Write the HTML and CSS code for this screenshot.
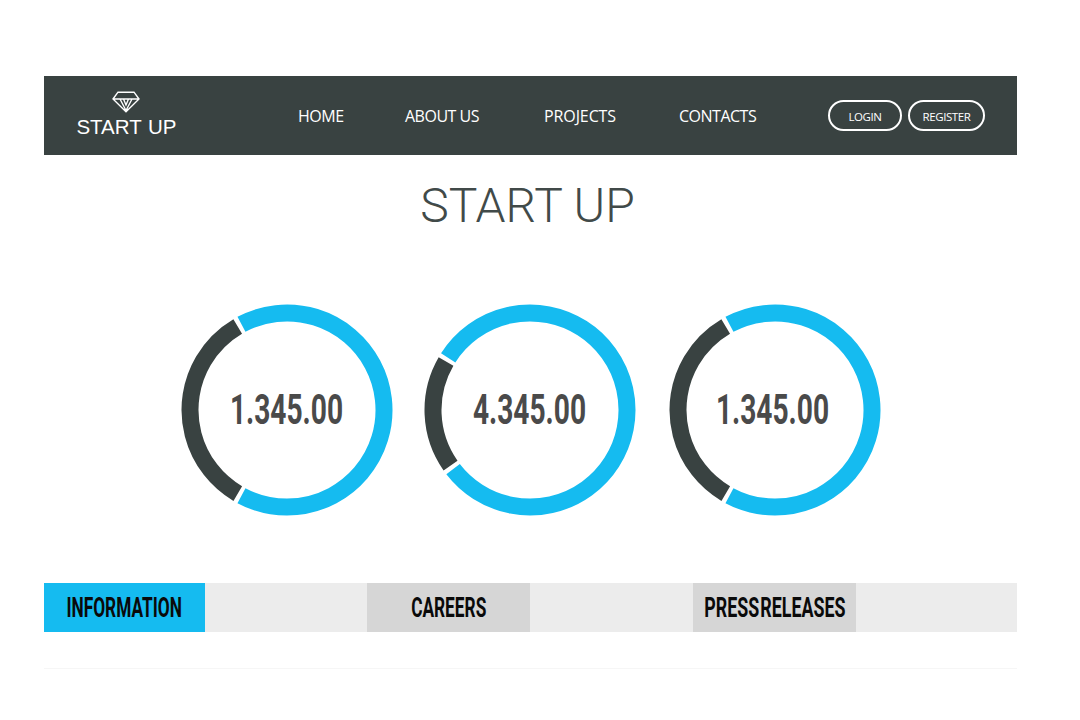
FILE: index.html
```html
<!DOCTYPE html>
<html>
  <head>
    <meta charset="UTF-8" />
    <title>Start Up</title>
    <link rel="stylesheet" href="styles.css">
  </head>
  <body>
    <div class="page">
      <div class="navbar">
        <div class="logo">
          <svg class="logo-icon" width="28" height="22" viewBox="0 0 28 22">
            <path d="M6 1.2H22L27 8L14 20.8L1 8Z M1 8H27 M8 8L14 19.5L20 8 M11.5 8L14 14L16.5 8" fill="none" stroke="#fff" stroke-width="1.4" />
          </svg>
          <div class="logo-text">START UP</div>
        </div>
        <div class="menu">
          <a href="#">HOME</a>
          <a href="#">ABOUT US</a>
          <a class="projects" href="#">PROJECTS</a>
          <a href="#">CONTACTS</a>
        </div>
        <div class="auth">
          <a class="pill login" href="#">LOGIN</a>
          <a class="pill register" href="#">REGISTER</a>
        </div>
      </div>

      <h1 class="title">START UP</h1>

      <div class="rings">
        <div class="ring">
          <svg width="212" height="212" viewBox="0 0 212 212">
            <circle class="arc blue" cx="106" cy="106" r="97" pathLength="360" stroke-dasharray="236 124" transform="rotate(-118 106 106)" />
            <circle class="arc dark" cx="106" cy="106" r="97" pathLength="360" stroke-dasharray="119 241" transform="rotate(120.5 106 106)" />
          </svg>
          <div class="amount"><span>1.345.00</span></div>
        </div>
        <div class="ring">
          <svg width="212" height="212" viewBox="0 0 212 212">
            <circle class="arc blue" cx="106" cy="106" r="97" pathLength="360" stroke-dasharray="290 70" transform="rotate(-147.5 106 106)" />
            <circle class="arc dark" cx="106" cy="106" r="97" pathLength="360" stroke-dasharray="65 295" transform="rotate(145 106 106)" />
          </svg>
          <div class="amount"><span>4.345.00</span></div>
        </div>
        <div class="ring last">
          <svg width="212" height="212" viewBox="0 0 212 212">
            <circle class="arc blue" cx="106" cy="106" r="97" pathLength="360" stroke-dasharray="236 124" transform="rotate(-118 106 106)" />
            <circle class="arc dark" cx="106" cy="106" r="97" pathLength="360" stroke-dasharray="119 241" transform="rotate(120.5 106 106)" />
          </svg>
          <div class="amount"><span>1.345.00</span></div>
        </div>
      </div>

      <div class="tabs">
        <div class="tab active"><span>INFORMATION</span></div>
        <div class="tab"></div>
        <div class="tab shaded"><span>CAREERS</span></div>
        <div class="tab"></div>
        <div class="tab shaded"><span class="press">PRESS RELEASES</span></div>
        <div class="tab"></div>
      </div>

      <div class="rule"></div>
    </div>
  </body>
</html>
```

FILE: styles.css
```css
html, body {
  margin: 0;
  padding: 0;
  background-color: #fff;
}

.page {
  width: 973px;
  margin-left: 44px;
  padding-top: 76px;
}

.navbar {
  display: flex;
  align-items: center;
  height: 79px;
  background-color: #394241;
  color: #fff;
}

.logo {
  width: 165px;
  display: flex;
  flex-direction: column;
  align-items: center;
}

.logo-icon {
  display: block;
  margin-left: -1px;
  margin-top: -3px;
}

.logo-text {
  font-family: "Liberation Sans", Arial, sans-serif;
  font-size: 20.5px;
  line-height: 22px;
  margin-top: 3px;
  word-spacing: 1px;
}

.menu {
  display: grid;
  grid-template-columns: 107px 139px 135px auto;
  margin-left: 89px;
  font-family: "Open Sans", sans-serif;
  font-size: 16px;
  letter-spacing: -0.5px;
}

.menu a {
  color: #fff;
  text-decoration: none;
}

.menu .projects {
  letter-spacing: -0.1px;
}

.auth {
  display: flex;
  gap: 6px;
  margin-left: auto;
  margin-right: 32px;
}

.pill {
  display: flex;
  justify-content: center;
  align-items: center;
  box-sizing: border-box;
  height: 31px;
  padding-top: 1px;
  border: 2px solid #fff;
  border-radius: 16px;
  color: #fff;
  font-family: "Open Sans", sans-serif;
  font-size: 11.5px;
  letter-spacing: -0.4px;
  text-decoration: none;
}

.login {
  width: 74px;
}

.register {
  width: 77px;
}

.title {
  margin: 23px 6px 0 0;
  text-align: center;
  font-family: Roboto, sans-serif;
  font-size: 48px;
  font-weight: 300;
  line-height: 56px;
  color: #414a49;
}

.rings {
  display: flex;
  margin-top: 70px;
  margin-left: 137px;
  gap: 31px;
}

.ring {
  position: relative;
  width: 212px;
  height: 212px;
}

.ring.last {
  margin-left: 2px;
}

.ring svg {
  display: block;
}

.arc {
  fill: none;
  stroke-width: 17;
}

.arc.blue {
  stroke: #15bbf0;
}

.arc.dark {
  stroke: #394241;
}

.amount {
  position: absolute;
  top: -2px;
  left: 0;
  right: 2px;
  bottom: 0;
  display: flex;
  justify-content: center;
  align-items: center;
  font-family: Roboto, sans-serif;
  font-size: 42px;
  font-weight: 700;
  color: #4a4a4a;
}

.ring.last .amount {
  right: 5px;
}

.amount span {
  transform: scaleX(0.67);
}

.tabs {
  display: grid;
  grid-template-columns: 161px 162px 163px 163px 163px 161px;
  height: 49px;
  margin-top: 67px;
  background-color: #ececec;
}

.tab {
  display: flex;
  justify-content: center;
  align-items: center;
  font-family: Roboto, sans-serif;
  font-size: 27px;
  font-weight: 700;
  color: #0a0a0a;
}

.tab span {
  white-space: nowrap;
  transform: scaleX(0.64);
}

.tab .press {
  word-spacing: -5px;
  transform: scaleX(0.66);
}

.tab.active {
  background-color: #15bbf0;
}

.tab.shaded {
  background-color: #d6d6d6;
}

.rule {
  height: 1px;
  margin-top: 36px;
  background-color: #f6f6f6;
}
```
